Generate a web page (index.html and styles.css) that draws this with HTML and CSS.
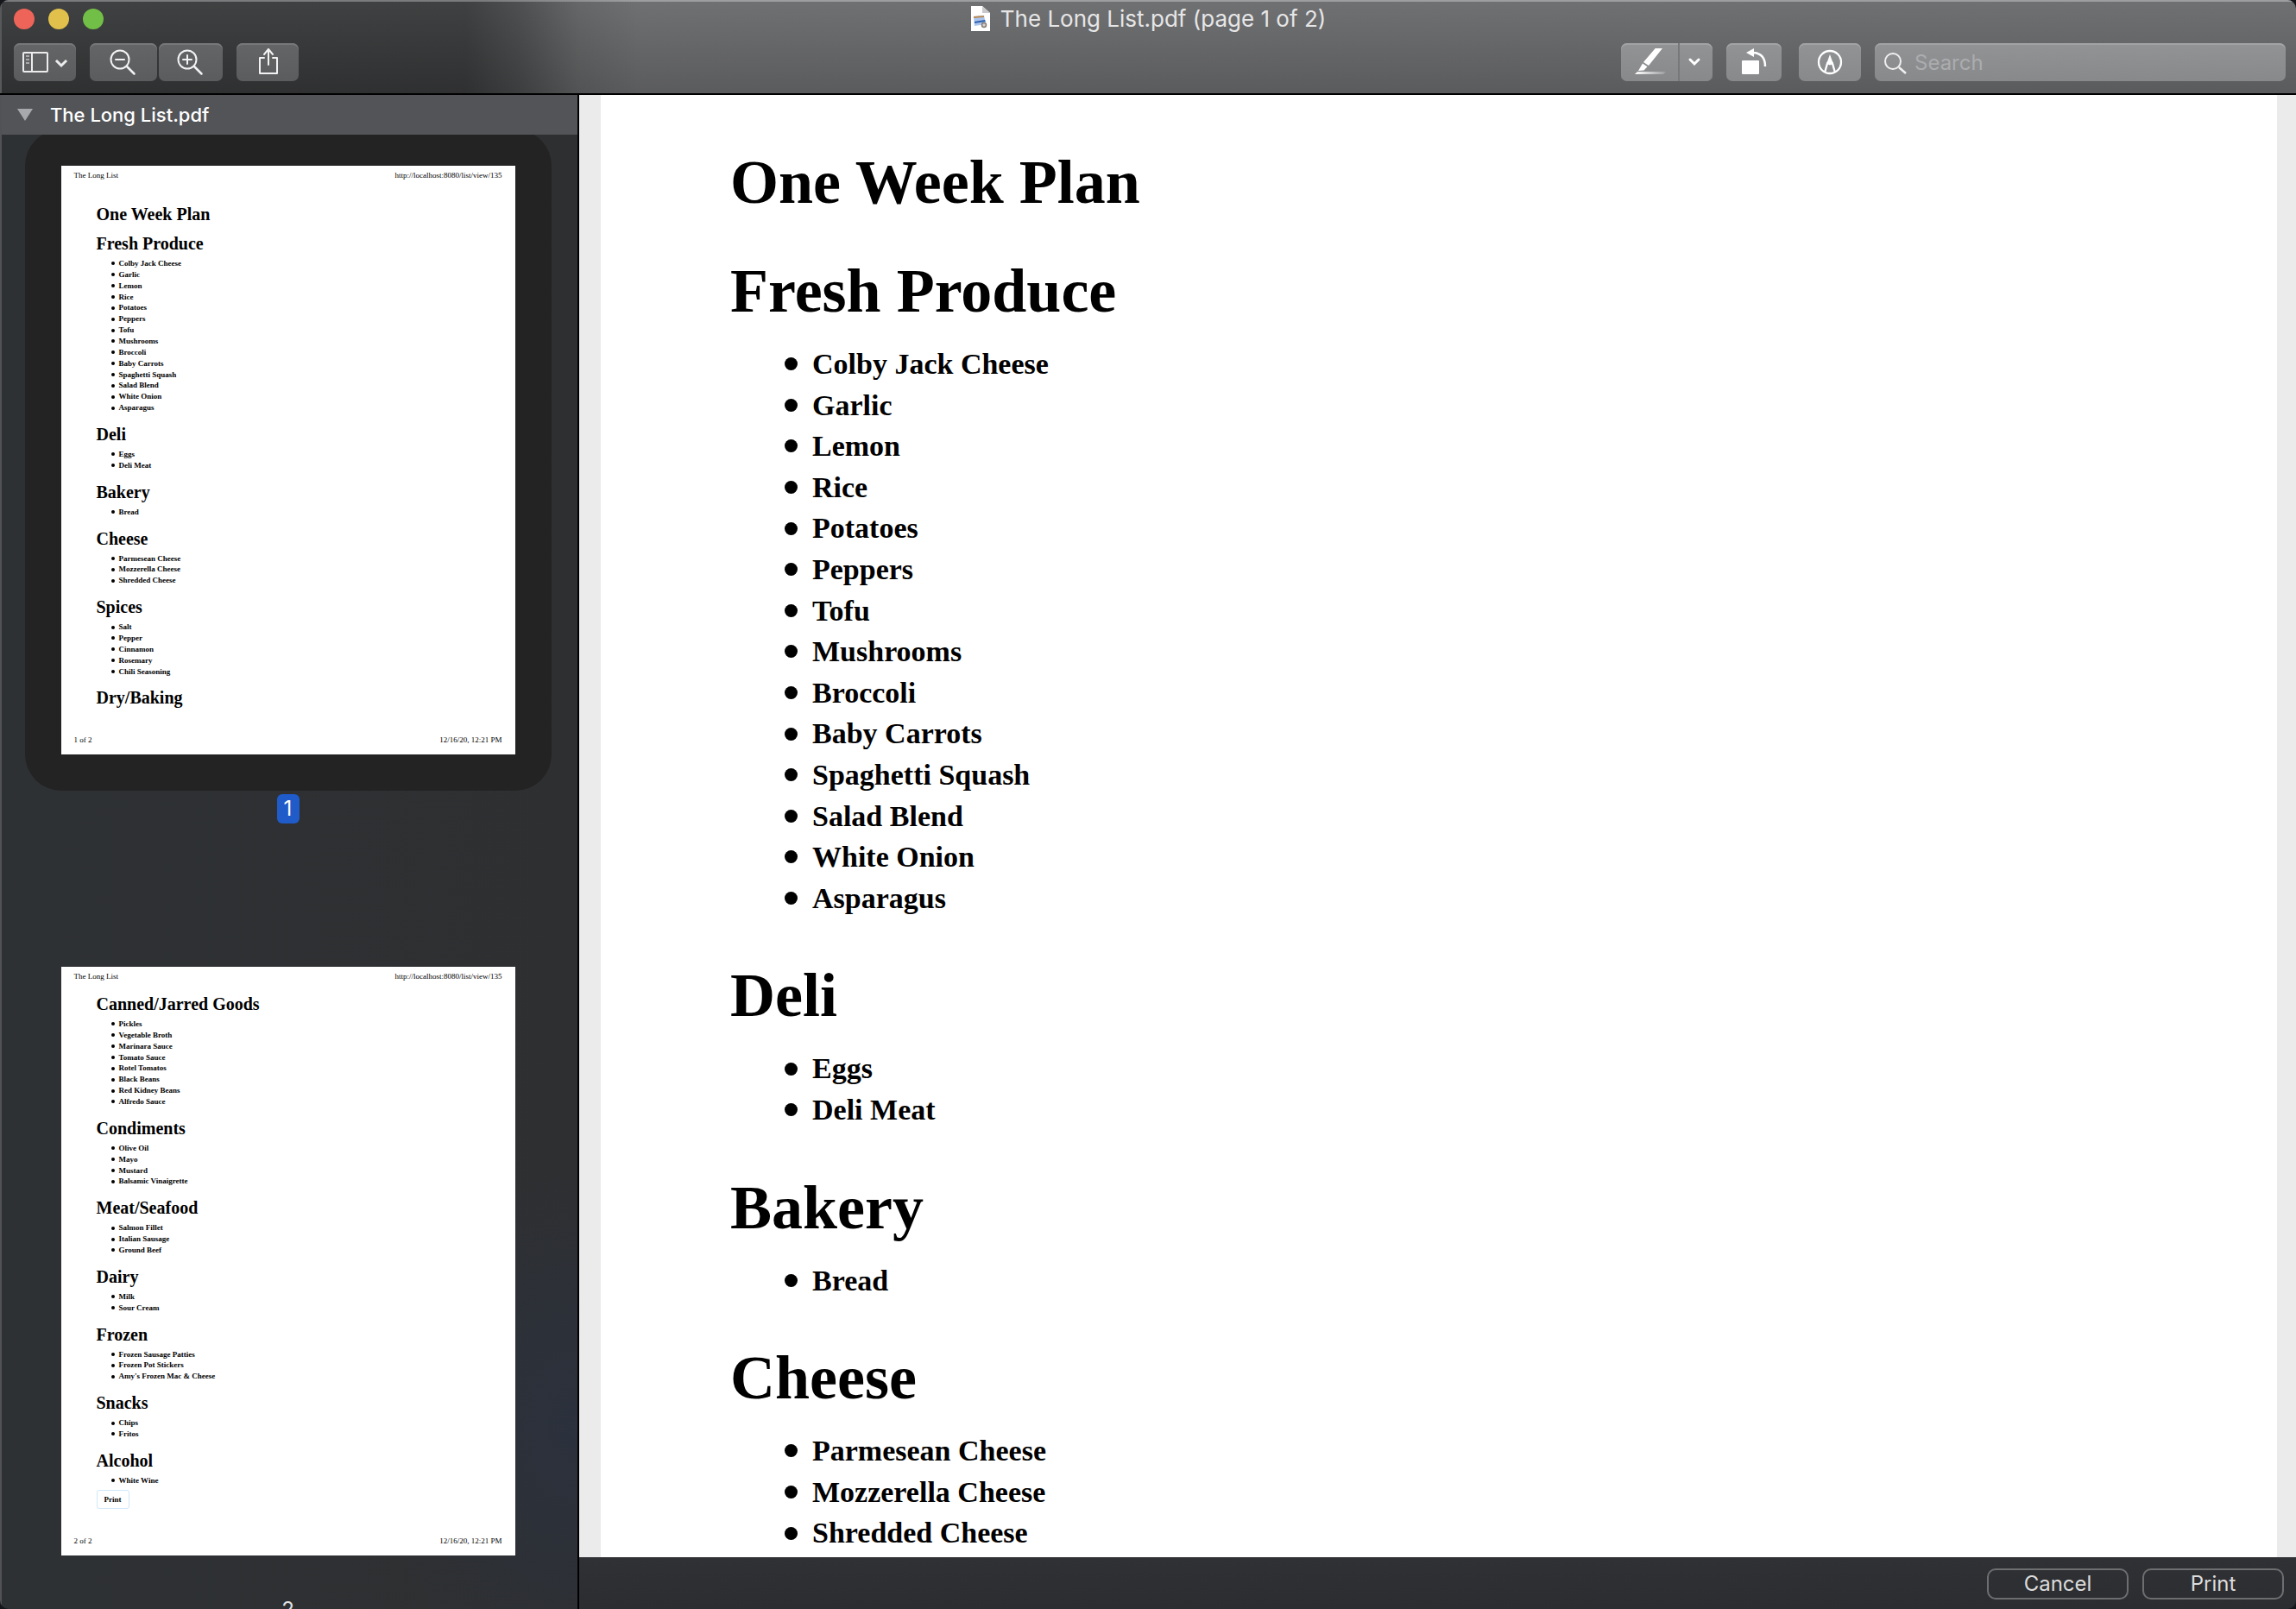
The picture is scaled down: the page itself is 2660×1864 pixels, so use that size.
FILE: index.html
```html
<!DOCTYPE html>
<html lang="en">
<head>
<meta charset="utf-8">
<title>The Long List.pdf</title>
<link rel="stylesheet" href="styles.css">
</head>
<body>
<div class="window">
  <header class="titlebar">
    <div class="title-row">
      <div class="lights">
        <button class="light light-close" aria-label="Close"></button>
        <button class="light light-min" aria-label="Minimize"></button>
        <button class="light light-zoom" aria-label="Zoom"></button>
      </div>
      <div class="title">
        <svg class="doc-icon" viewBox="0 0 24 30" aria-hidden="true">
          <path d="M1 0h13l9 8v21H1z" fill="#fff"/>
          <path d="M14 0v8h9z" fill="#c9c9cb"/>
          <path d="M4 12l12-1 2 10-13 2z" fill="#a9c4ee"/>
          <path d="M4 12l12-1v2L4 14z" fill="#b98a55"/>
          <path d="M5 18l12-2 1 2-13 2z" fill="#2e5fae"/>
          <circle cx="16" cy="22" r="2.500" fill="#d5d2cf" stroke="#857b74" stroke-width="1.500"/>
        </svg>
        <span>The Long List.pdf (page 1 of 2)</span>
      </div>
    </div>
    <div class="toolbar">
      <button class="tool tool-view" aria-label="View menu">
        <svg viewBox="0 0 72 44"><g fill="none" stroke="#ececed"><rect x="11" y="11" width="28" height="22" rx="1" stroke-width="2"/><path d="M21 11v22" stroke-width="2"/><path d="M14 15h4M14 19h4M14 23h4" stroke="#a9aaac" stroke-width="2"/><path d="M50 21l5 5 5-5" stroke-width="3" stroke-linecap="square"/></g></svg>
      </button>
      <div class="pair">
        <button class="tool tool-out" aria-label="Zoom out">
          <svg viewBox="0 0 78 44"><g fill="none" stroke="#f2f2f3" stroke-width="2" stroke-linecap="round"><circle cx="35" cy="19" r="10.500"/><path d="M30 19h10"/><path d="M43 27l8.500 8.500" stroke-width="2.500"/></g></svg>
        </button>
        <button class="tool tool-in" aria-label="Zoom in">
          <svg viewBox="0 0 74 44"><g fill="none" stroke="#f2f2f3" stroke-width="2" stroke-linecap="round"><circle cx="33" cy="19" r="10.500"/><path d="M28 19h10M33 14v10"/><path d="M41 27l8.500 8.500" stroke-width="2.500"/></g></svg>
        </button>
      </div>
      <button class="tool tool-share" aria-label="Share">
        <svg viewBox="0 0 72 44"><path d="M32 17h-5v18h20V17h-5M37 25V7M32 13l5-6 5 6" fill="none" stroke="#f2f2f3" stroke-width="2" stroke-linejoin="round" stroke-linecap="round"/></svg>
      </button>
      <div class="spacer"></div>
      <div class="split">
        <button class="tool bright tool-pen" aria-label="Highlight">
          <svg viewBox="0 0 66 44">
            <defs><linearGradient id="ink"><stop offset="0" stop-color="#fff"/><stop offset="1" stop-color="#9c9da0"/></linearGradient></defs>
            <path d="M39.700 6H48L32 26l-6-4zM25 23.500l5.500 3.700-4 4.300L20 32z" fill="#fff"/>
            <path d="M19 33h33l-3 3H16z" fill="url(#ink)"/>
          </svg>
        </button>
        <button class="tool bright tool-more" aria-label="Highlight options">
          <svg viewBox="0 0 38 44"><path d="M12 19l5 5 5-5" fill="none" stroke="#fff" stroke-width="3" stroke-linecap="round"/></svg>
        </button>
      </div>
      <button class="tool bright tool-rotate" aria-label="Rotate left">
        <svg viewBox="0 0 64 44"><rect x="18" y="20" width="20" height="16" rx="1" fill="#fff"/><path d="M23 11l9-5v10z" fill="#fff"/><path d="M31 11Q45 12 45 27" fill="none" stroke="#fff" stroke-width="2.500"/></svg>
      </button>
      <button class="tool bright tool-markup" aria-label="Markup">
        <svg viewBox="0 0 72 44"><circle cx="36" cy="22" r="13" fill="none" stroke="#fff" stroke-width="2.300"/><path d="M36 13l4.500 12.500-2-1-2.500 1-2.500-1-2 1z" fill="#fff"/><path d="M33.500 22l-3.500 12M38.500 22l3.500 12" stroke="#fff" stroke-width="2.300"/></svg>
      </button>
      <label class="search">
        <svg viewBox="0 0 40 44" aria-hidden="true"><circle cx="21" cy="21" r="9" fill="none" stroke="#f0f0f1" stroke-width="2"/><path d="M28 28l8 7" stroke="#f0f0f1" stroke-width="2.500"/></svg>
        <input type="search" placeholder="Search" aria-label="Search">
      </label>
    </div>
  </header>

  <div class="body">
    <aside class="sidebar">
      <div class="sidebar-head">
        <svg viewBox="0 0 18 14" aria-hidden="true"><path d="M0 0h18L9 14z" fill="#a8a9ac"/></svg>
        <span>The Long List.pdf</span>
      </div>
      <div class="thumbs">
        <figure class="thumb selected">
          <div class="frame">
            <article class="sheet">
              <div class="running"><span>The Long List</span><span>http://localhost:8080/list/view/135</span></div>
              <div class="content first">
                <h1>One Week Plan</h1>
                <h2>Fresh Produce</h2>
                <ul><li>Colby Jack Cheese</li><li>Garlic</li><li>Lemon</li><li>Rice</li><li>Potatoes</li><li>Peppers</li><li>Tofu</li><li>Mushrooms</li><li>Broccoli</li><li>Baby Carrots</li><li>Spaghetti Squash</li><li>Salad Blend</li><li>White Onion</li><li>Asparagus</li></ul>
                <h2>Deli</h2>
                <ul><li>Eggs</li><li>Deli Meat</li></ul>
                <h2>Bakery</h2>
                <ul><li>Bread</li></ul>
                <h2>Cheese</h2>
                <ul><li>Parmesean Cheese</li><li>Mozzerella Cheese</li><li>Shredded Cheese</li></ul>
                <h2>Spices</h2>
                <ul><li>Salt</li><li>Pepper</li><li>Cinnamon</li><li>Rosemary</li><li>Chili Seasoning</li></ul>
                <h2>Dry/Baking</h2>
              </div>
              <div class="running foot"><span>1 of 2</span><span>12/16/20, 12:21 PM</span></div>
            </article>
          </div>
          <figcaption>1</figcaption>
        </figure>
        <figure class="thumb">
          <div class="frame">
            <article class="sheet">
              <div class="running"><span>The Long List</span><span>http://localhost:8080/list/view/135</span></div>
              <div class="content">
                <h2>Canned/Jarred Goods</h2>
                <ul><li>Pickles</li><li>Vegetable Broth</li><li>Marinara Sauce</li><li>Tomato Sauce</li><li>Rotel Tomatos</li><li>Black Beans</li><li>Red Kidney Beans</li><li>Alfredo Sauce</li></ul>
                <h2>Condiments</h2>
                <ul><li>Olive Oil</li><li>Mayo</li><li>Mustard</li><li>Balsamic Vinaigrette</li></ul>
                <h2>Meat/Seafood</h2>
                <ul><li>Salmon Fillet</li><li>Italian Sausage</li><li>Ground Beef</li></ul>
                <h2>Dairy</h2>
                <ul><li>Milk</li><li>Sour Cream</li></ul>
                <h2>Frozen</h2>
                <ul><li>Frozen Sausage Patties</li><li>Frozen Pot Stickers</li><li>Amy's Frozen Mac &amp; Cheese</li></ul>
                <h2>Snacks</h2>
                <ul><li>Chips</li><li>Fritos</li></ul>
                <h2>Alcohol</h2>
                <ul><li>White Wine</li></ul>
                <button class="sheet-print">Print</button>
              </div>
              <div class="running foot"><span>2 of 2</span><span>12/16/20, 12:21 PM</span></div>
            </article>
          </div>
          <figcaption>2</figcaption>
        </figure>
      </div>
    </aside>

    <main class="main">
      <div class="viewer">
        <article class="page">
          <h1>One Week Plan</h1>
          <h2>Fresh Produce</h2>
          <ul><li>Colby Jack Cheese</li><li>Garlic</li><li>Lemon</li><li>Rice</li><li>Potatoes</li><li>Peppers</li><li>Tofu</li><li>Mushrooms</li><li>Broccoli</li><li>Baby Carrots</li><li>Spaghetti Squash</li><li>Salad Blend</li><li>White Onion</li><li>Asparagus</li></ul>
          <h2>Deli</h2>
          <ul><li>Eggs</li><li>Deli Meat</li></ul>
          <h2>Bakery</h2>
          <ul><li>Bread</li></ul>
          <h2>Cheese</h2>
          <ul><li>Parmesean Cheese</li><li>Mozzerella Cheese</li><li>Shredded Cheese</li></ul>
        </article>
      </div>
      <footer class="actions">
        <button class="action">Cancel</button>
        <button class="action">Print</button>
      </footer>
    </main>
  </div>
</div>
</body>
</html>
```
FILE: styles.css
```css
* {
  box-sizing: border-box;
}

html {
  background: #15161c;
}

body {
  margin: 0;
  font-family: Inter, "Liberation Sans", sans-serif;
}

button,
input {
  font: inherit;
  border: 0;
  padding: 0;
  margin: 0;
}

h1,
h2,
ul,
figure {
  margin: 0;
  padding: 0;
}

ul {
  list-style: none;
}

svg {
  display: block;
}

.window {
  display: flex;
  flex-direction: column;
  height: 100vh;
  border-radius: 10px;
  overflow: hidden;
}

/* Title bar and toolbar */
.titlebar {
  flex: none;
  border-bottom: 2px solid #000;
  background:
    linear-gradient(90deg, #7a7b7c 560px, #9d9ea0 740px) top / 100% 2px no-repeat,
    linear-gradient(90deg, #56585a, #56585a) left / 2px 100% no-repeat,
    linear-gradient(rgba(255, 255, 255, 0.05), rgba(0, 0, 0, 0.13)),
    linear-gradient(90deg, #363738 540px, #454647 600px, #5e5f60 670px, #68696b 740px);
}

.title-row {
  display: grid;
  grid-template-columns: 1fr auto 1fr;
  align-items: center;
  height: 44px;
  padding: 0 16px;
}

.lights {
  display: flex;
  gap: 16px;
}

.light {
  width: 24px;
  height: 24px;
  border-radius: 50%;
}

.light-close {
  background: #ee6459;
}

.light-min {
  background: #e1c04c;
}

.light-zoom {
  background: #71bf46;
}

.title {
  display: flex;
  align-items: center;
  gap: 11px;
  font-size: 26px;
  line-height: 32px;
  color: #e6e6e7;
}

.doc-icon {
  width: 24px;
  height: 30px;
}

.toolbar {
  display: flex;
  padding: 6px 12px 14px 16px;
}

.tool {
  height: 44px;
  border-radius: 7px;
  overflow: hidden;
  background: linear-gradient(#646567, #5b5c5e);
  box-shadow: inset 0 2px 0 #77787a;
}

.tool svg {
  width: 100%;
  height: 44px;
}

.bright,
.search {
  background: linear-gradient(#929395, #88898b);
  box-shadow: inset 0 2px 0 #a2a3a5;
}

.pair {
  display: flex;
  gap: 2px;
  margin: 0 16px;
}

.spacer {
  flex: 1;
}

.split {
  display: flex;
  gap: 2px;
  border-radius: 7px;
  background: #77787a;
}

.tool-view,
.tool-share,
.tool-markup {
  width: 72px;
}

.tool-out {
  width: 78px;
}

.tool-in {
  width: 74px;
}

.tool-pen {
  width: 66px;
  border-radius: 7px 0 0 7px;
}

.tool-more {
  width: 38px;
  border-radius: 0 7px 7px 0;
}

.tool-rotate {
  width: 64px;
  margin: 0 20px 0 16px;
}

.search {
  display: flex;
  width: 476px;
  margin-left: 16px;
  border-radius: 7px;
}

.search svg {
  flex: none;
  width: 40px;
  height: 44px;
}

.search input {
  flex: 1;
  min-width: 0;
  margin-left: 6px;
  background: none;
  font-size: 24px;
  color: #fff;
  outline: 0;
}

.search input::placeholder {
  color: #abacae;
  opacity: 1;
}

/* Body */
.body {
  display: flex;
  flex: 1;
  min-height: 0;
}

.sidebar {
  display: flex;
  flex-direction: column;
  width: 671px;
  flex: none;
  border-left: 2px solid #505255;
  border-right: 2px solid #000;
  overflow: hidden;
  background:
    radial-gradient(240px 300px at 100% 88%, #2b313d, rgba(43, 49, 61, 0)),
    linear-gradient(90deg, #2e3134, #2e2f31);
}

.sidebar-head {
  display: flex;
  flex: none;
  align-items: center;
  gap: 20px;
  height: 46px;
  padding-left: 18px;
  background: #535457;
  font-size: 22px;
  font-weight: 500;
  color: #fff;
}

.sidebar-head svg {
  width: 18px;
  height: 14px;
}

.thumbs {
  flex: 1;
  min-height: 0;
  padding-right: 4px;
  overflow: hidden;
}

.thumb {
  display: flex;
  flex-direction: column;
  align-items: center;
  margin-bottom: 124px;
}

.thumb:first-child {
  margin-top: -6px;
}

.frame {
  padding: 42px;
  border-radius: 42px;
}

.selected .frame {
  background: #232323;
}

.thumb figcaption {
  width: 26px;
  margin-top: 4px;
  border-radius: 6px;
  font-size: 24px;
  line-height: 34px;
  text-align: center;
  color: #e2e2e3;
}

.selected figcaption {
  background: #1f5bc9;
  color: #fff;
}

/* Sheet thumbnails */
.sheet {
  display: flex;
  flex-direction: column;
  width: 526px;
  height: 682px;
  background: #fff;
  color: #000;
  font-family: "Liberation Serif", serif;
  font-size: 9px;
}

.running {
  display: flex;
  justify-content: space-between;
  padding: 5px 15px 0;
  line-height: 12px;
}

.foot {
  padding: 0 15px 11px;
}

.content {
  flex: 1;
  padding: 14px 41px 0;
  font-weight: 700;
}

.first {
  padding-top: 27px;
}

.content h1,
.content h2 {
  font-size: 20px;
  line-height: 24px;
}

.content h1 {
  margin-bottom: 10px;
}

.content ul {
  margin: 5px 0 12px;
  padding-left: 17px;
  line-height: 1.43;
}

.sheet li,
.page li {
  display: flex;
  align-items: center;
}

.sheet li {
  gap: 5px;
}

.sheet li::before,
.page li::before {
  content: "";
  flex: none;
  width: 4px;
  height: 4px;
  border-radius: 50%;
  background: #000;
}

.sheet-print {
  display: block;
  width: 38px;
  height: 22px;
  margin-top: -8px;
  border: 1px solid #cfe8fb;
  border-radius: 3px;
  background: #fff;
  color: #000;
}

/* Main page */
.main {
  display: flex;
  flex: 1;
  flex-direction: column;
  min-width: 0;
}

.viewer {
  flex: 1;
  min-height: 0;
  overflow: hidden;
  padding: 0 22px 0 25px;
  background: #ebebeb;
}

.page {
  min-height: 100%;
  padding: 58px 150px;
  background: #fff;
  color: #000;
  font-family: "Liberation Serif", serif;
  font-size: 34px;
  font-weight: 700;
}

.page h1,
.page h2 {
  font-size: 72px;
  line-height: 86px;
}

.page h1 {
  margin-bottom: 40px;
}

.page ul {
  margin: 18px 0 46px;
  padding-left: 63px;
  line-height: 1.4;
}

.page li {
  gap: 17px;
}

.page li::before {
  width: 15px;
  height: 15px;
}

.actions {
  display: flex;
  flex: none;
  justify-content: flex-end;
  gap: 16px;
  padding: 13px 14px 11px;
  background: linear-gradient(#303134, #2c2d30);
}

.action {
  width: 164px;
  height: 36px;
  border: 2px solid #6d6e70;
  border-radius: 10px;
  background: none;
  font-size: 24px;
  line-height: 32px;
  color: #dcdcdd;
}
```
